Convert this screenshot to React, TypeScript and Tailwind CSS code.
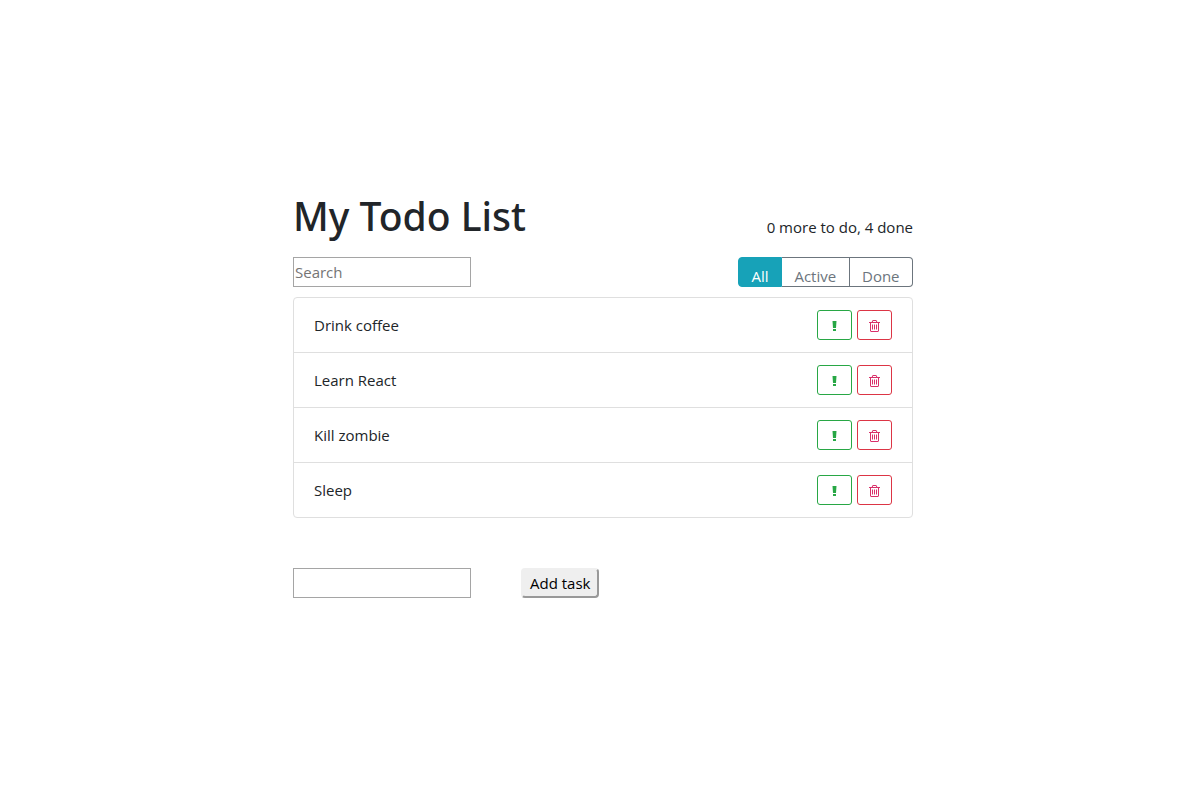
import { useState } from 'react';

const tasks = ['Drink coffee', 'Learn React', 'Kill zombie', 'Sleep'];
const filters = ['All', 'Active', 'Done'];

function ExclamationIcon() {
  return (
    <svg aria-hidden="true" width="5" height="10" viewBox="0 0 5 10" fill="currentColor">
      <path d="M.5 0h4l-.5 7h-3z M1 8h3v2h-3z" />
    </svg>
  );
}

function TrashIcon() {
  return (
    <svg aria-hidden="true" width="11" height="12" viewBox="192 128 1408 1536" fill="currentColor">
      <path d="M704 736v576q0 14-9 23t-23 9h-64q-14 0-23-9t-9-23v-576q0-14 9-23t23-9h64q14 0 23 9t9 23zm256 0v576q0 14-9 23t-23 9h-64q-14 0-23-9t-9-23v-576q0-14 9-23t23-9h64q14 0 23 9t9 23zm256 0v576q0 14-9 23t-23 9h-64q-14 0-23-9t-9-23v-576q0-14 9-23t23-9h64q14 0 23 9t9 23zm128 724v-948h-896v948q0 22 7 40.500t14.500 27 10.500 8.500h832q3 0 10.500-8.500t14.500-27 7-40.500zm-672-1076h448l-48-117q-7-9-17-11h-317q-10 2-17 11zm928 32v64q0 14-9 23t-23 9h-96v948q0 83-47 143.500t-113 60.500h-832q-66 0-113-58.500t-47-141.500v-952h-96q-14 0-23-9t-9-23v-64q0-14 9-23t23-9h309l70-167q15-37 54-63t79-26h320q40 0 79 26t54 63l70 167h309q14 0 23 9t9 23z" />
    </svg>
  );
}

function TaskRow({ label }: { label: string }) {
  return (
    <li className="flex h-[55px] items-center justify-between border-b border-[#dfdfdf] px-5 last:h-[54px] last:border-b-0">
      <span>{label}</span>
      <div className="flex gap-[5px]">
        <button
          type="button"
          aria-label={`Mark ${label} as important`}
          className="flex h-[30px] w-[35px] items-center justify-center rounded-[3px] border border-[#28a745] pt-[2px] text-[#28a745]"
        >
          <ExclamationIcon />
        </button>
        <button
          type="button"
          aria-label={`Delete ${label}`}
          className="flex h-[30px] w-[35px] items-center justify-center rounded-[3px] border border-[#dc3545] pt-[2px] text-[#d9306a]"
        >
          <TrashIcon />
        </button>
      </div>
    </li>
  );
}

export default function App() {
  const [active, setActive] = useState('All');

  return (
    <div className="min-h-screen bg-white pt-[192px] pl-[6px] font-['Open_Sans',sans-serif] text-[15px] leading-6 text-[#212529]">
      <main className="mx-auto max-w-[620px]">
        <header className="flex items-end justify-between">
          <h1 className="font-['Noto_Sans',sans-serif] text-[39px] leading-12 font-medium">My Todo List</h1>
          <p className="pb-px">0 more to do, 4 done</p>
        </header>

        <div className="mt-[17px] flex justify-between">
          <input
            type="text"
            aria-label="Search"
            placeholder="Search"
            className="h-[30px] w-[178px] border border-[#a5a5a5] px-px placeholder:text-[#757575]"
          />
          <div className="flex h-[30px] w-[175px]">
            {filters.map((name) => (
              <button
                key={name}
                type="button"
                aria-pressed={active === name}
                onClick={() => setActive(name)}
                className="grow border-y border-r border-[#6c757d] px-[11px] pt-[6px] text-[#6c757d] first:rounded-l-[4px] first:border-l last:rounded-r-[4px] aria-pressed:border-[#17a2b8] aria-pressed:bg-[#17a2b8] aria-pressed:text-white"
              >
                {name}
              </button>
            ))}
          </div>
        </div>

        <ul className="mt-[10px] rounded-[4px] border border-[#dfdfdf]">
          {tasks.map((task) => (
            <TaskRow key={task} label={task} />
          ))}
        </ul>

        <form className="mt-[50px] flex gap-[50px]" onSubmit={(event) => event.preventDefault()}>
          <input type="text" aria-label="New task" className="h-[30px] w-[178px] border border-[#a5a5a5] px-px" />
          <button
            type="submit"
            className="h-[30px] rounded-[4px] border-2 border-t-[#efefef] border-r-[#999999] border-b-[#999999] border-l-[#efefef] bg-[#efefef] px-[7px] text-black"
          >
            Add task
          </button>
        </form>
      </main>
    </div>
  );
}
